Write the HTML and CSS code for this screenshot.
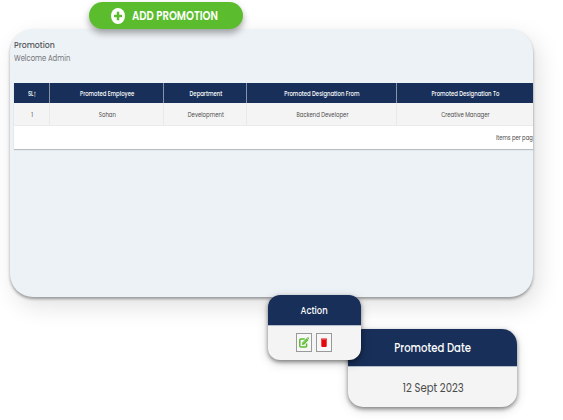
FILE: index.html
```html
<!DOCTYPE html>
<html lang="en">
<head>
<meta charset="utf-8">
<title>Promotion</title>
<link rel="stylesheet" href="styles.css">
</head>
<body>
<main class="stage">
  <section class="panel">
    <header class="intro">
      <h1 class="title">Promotion</h1>
      <p class="welcome">Welcome Admin</p>
    </header>
    <div class="sheet">
      <table class="grid">
        <colgroup><col class="c-sl"><col class="c-emp"><col class="c-dep"><col class="c-from"><col class="c-to"></colgroup>
        <thead>
          <tr><th><span>SL<svg class="sort" viewBox="0 0 3 6"><path d="M1.5 6V1M.3 2.2L1.5.8l1.2 1.4" fill="none" stroke="#8fb8bd" stroke-width=".8"/></svg></span></th><th><span>Promoted Employee</span></th><th><span>Department</span></th><th><span>Promoted Designation From</span></th><th><span>Promoted Designation To</span></th></tr>
        </thead>
        <tbody>
          <tr><td><span>1</span></td><td><span>Sohan</span></td><td><span>Development</span></td><td><span>Backend Developer</span></td><td><span>Creative Manager</span></td></tr>
        </tbody>
      </table>
      <div class="pager"><span>Items per pag</span></div>
    </div>
  </section>
  <button class="add">
    <svg class="plus" viewBox="0 0 14 16"><ellipse cx="7" cy="8" rx="7" ry="8" fill="#fff"/><path d="M7 3.7v8.6M3 8h8" stroke="#5bbd2e" stroke-width="2.5"/></svg>
    <span>ADD PROMOTION</span>
  </button>
  <section class="float date">
    <h2><span>Promoted Date</span></h2>
    <p><span>12 Sept 2023</span></p>
  </section>
  <section class="float action">
    <h2><span>Action</span></h2>
    <div class="tools">
      <button class="tool"><svg width="10" height="11" viewBox="0 0 10 11"><path d="M5.8 2H1.8Q.8 2 .8 3v6q0 1 1 1h4.8q1 0 1-1V6.5" fill="none" stroke="#5bbd2e" stroke-width="1.5"/><path d="M3 8l.4-2.5L7.6 1.2l1.9 1.9-4.2 4.3z" fill="#5bbd2e"/><path d="M8 .8l.8-.6q.5-.2.8.2l.3.4q.3.4-.1.8l-.5.8z" fill="#5bbd2e"/><path d="M4.2 6.3l3-3" stroke="#d5f0c8" stroke-width=".5"/></svg></button>
      <button class="tool"><svg width="6" height="9" viewBox="0 0 6 9"><path d="M0 .5h6v1.2H0zM.3 2h5.4v6q0 1-1 1H1.3q-1 0-1-1z" fill="#e6060d"/></svg></button>
    </div>
  </section>
</main>
</body>
</html>
```
FILE: styles.css
```css
* { box-sizing: border-box; }
body { margin: 0; background: #fff; font-family: Poppins, Roboto, "Liberation Sans", sans-serif; color: #555; }
h1, h2, p { margin: 0; font-weight: 400; }
button { margin: 0; padding: 0; font-family: inherit; }
span { display: inline-block; white-space: nowrap; transform: scaleX(.84); }
.stage { position: relative; width: 563px; height: 420px; overflow: hidden; padding: 29px 30px 0 10px; }

.panel { height: 268px; border-radius: 23px; background: #edf2f6; padding: 9px 0 0 4px;
  box-shadow: 0 2px 3px rgba(0,0,0,.35), 5px 9px 24px rgba(0,0,0,.12); }
.intro { height: 45px; }
.title { font-size: 9.3px; line-height: 14px; font-weight: 500; color: #55575b; transform: scaleX(.84); transform-origin: left; }
.welcome { font-size: 8.5px; line-height: 12px; color: #737578; transform: scaleX(.8); transform-origin: left; }
.sheet { overflow: hidden; background: #fff; height: 66px; box-shadow: 0 1px 1px rgba(0,0,0,.22); }
.grid { width: 519px; table-layout: fixed; border-collapse: separate; border-spacing: 0; text-align: center; }
.c-sl { width: 36px; }
.c-emp { width: 114px; }
.c-dep { width: 83px; }
.c-from { width: 150px; }
.c-to { width: 136px; }
th, td { padding: 1px 0 0 1px; font-size: 6.5px; line-height: 8px; }
th { height: 20px; background: #182f59; color: #fff; font-weight: 500; border-right: 1px solid #8792a7; }
th span { transform: scaleX(.82); }
td { height: 23px; background: #f4f4f4; border-right: 1px solid #e8e9ea; border-bottom: 1px solid #eaebec; color: #4c4c4c; }
td span { transform: scaleX(.825); }
th:last-child, td:last-child { border-right: 0; padding-right: 1px; }
.sort { width: 3px; height: 6px; vertical-align: -1px; }
.pager { height: 23px; padding-left: 482px; font-size: 6.8px; line-height: 24px; color: #484848; }
.pager span { transform-origin: left; transform: scaleX(.77); }

.add { position: absolute; left: 89px; top: 2px; width: 154px; height: 27px; border: 0; border-radius: 14px; background: #5bbd2e; color: #fff;
  display: flex; align-items: center; padding: 1px 0 0 22px; gap: 7px; font-size: 12px; font-weight: 600;
  box-shadow: 0 4px 7px rgba(0,0,0,.35); }
.add span { transform: scaleX(.845); transform-origin: left; }
.plus { width: 14px; height: 16px; flex: none; }

.float { position: absolute; overflow: hidden; background: #f4f4f4; text-align: center; }
.float h2 { background: #182f59; color: #fff; font-weight: 500; border-bottom: 1px solid #b4bdcb; }
.date { left: 348px; top: 329px; width: 169px; height: 78px; border-radius: 15px; box-shadow: 0 2px 4px rgba(0,0,0,.45), 0 3px 12px rgba(0,0,0,.14); }
.date h2 { height: 38px; font-size: 12px; line-height: 38px; padding-left: 1px; }
.date p { font-size: 12px; line-height: 41px; color: #4a4a4a; padding-left: 2px; }
.action { left: 268px; top: 295px; width: 93px; height: 65px; border-radius: 12px; box-shadow: 0 2px 4px rgba(0,0,0,.45), 0 3px 12px rgba(0,0,0,.16); }
.action h2 { height: 31px; font-size: 10px; line-height: 31px; }
.tools { display: flex; justify-content: center; gap: 4px; padding: 7px 2px 0 0; }
.tool { width: 16px; height: 19px; border: 1px solid #999; background: #f7f7f7; display: flex; align-items: center; justify-content: center; }
```
